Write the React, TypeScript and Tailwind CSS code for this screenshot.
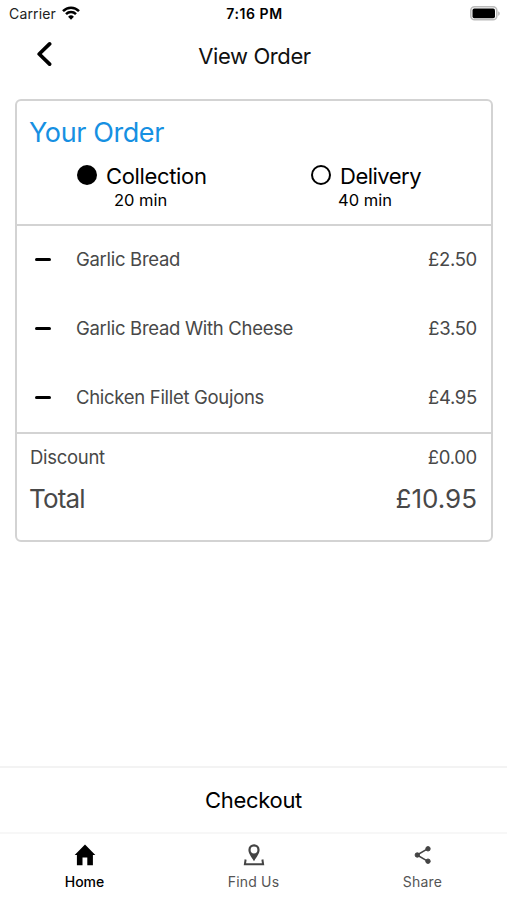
import React from 'react';

const items = [
  { name: 'Garlic Bread', price: '£2.50' },
  { name: 'Garlic Bread With Cheese', price: '£3.50' },
  { name: 'Chicken Fillet Goujons', price: '£4.95' },
];

const StatusBar = () => {
  return (
    <div className="grid h-7 grid-cols-3 items-center pl-[9px] pr-[7px] text-black">
      <div className="flex items-center gap-[6px]">
        <span className="text-[14px] leading-none tracking-[0.15px] text-[#222]">Carrier</span>
        <svg className="-mt-0.5" width="18" height="14" viewBox="0 0 18 14" fill="none" stroke="currentColor" strokeWidth="2.5">
          <path d="M1 5.1C5.5.5 12.5.5 17 5.1" />
          <path d="M4 8.2c2.8-2.8 7.2-2.8 10 0" />
          <path d="M9 13.7L6.1 10.8a4.1 4.1 0 0 1 5.8 0z" fill="currentColor" stroke="none" />
        </svg>
      </div>
      <span className="-mt-px text-center text-[14px] font-semibold leading-none tracking-[0.55px]">7:16 PM</span>
      <svg className="-mt-px justify-self-end" width="30" height="15" viewBox="0 0 30 15">
        <rect x="0.8" y="0.8" width="26" height="13" rx="3.8" fill="#fff" stroke="#bbb" strokeWidth="1.6" />
        <rect x="2.5" y="2.6" width="22.5" height="9.6" rx="1.8" fill="#000" />
        <path d="M28.3 5.2c1.8.8 1.8 3.8 0 4.6z" fill="#aaa" />
      </svg>
    </div>
  );
};

const Header = () => {
  return (
    <header className="grid h-[55px] grid-cols-[80px_1fr_80px] items-center">
      <button className="-mt-1 ml-[36px] w-4">
        <svg width="16" height="26" viewBox="0 0 16 26" fill="none" stroke="#000" strokeWidth="3.7" strokeLinecap="round" strokeLinejoin="round">
          <path d="M13.6 2.9L3.2 13l10.4 10.1" />
        </svg>
      </button>
      <h1 className="pl-0.5 text-center text-[22px] leading-none tracking-[-0.4px] text-[#111]">View Order</h1>
    </header>
  );
};

const OrderCard = () => {
  return (
    <section className="ml-[15px] mr-[14px] mt-4 h-[443px] rounded-md border-2 border-[#d3d3d3]">
      <div className="h-[125px] border-b-2 border-[#d3d3d3] pt-[17px]">
        <h2 className="ml-3 text-[27px] leading-[30px] tracking-[-0.4px] text-[#1690e2]">Your Order</h2>
        <div className="mt-[15px] grid grid-cols-[234px_1fr] text-black">
          <div className="pl-[60px]">
            <div className="flex h-6 items-center">
              <span className="mr-[9px] size-5 rounded-full bg-black" />
              <span className="pt-0.5 text-[22px] leading-6 tracking-[-0.35px]">Collection</span>
            </div>
            <div className="ml-[37px] pt-px text-[16.5px] leading-6">20 min</div>
          </div>
          <div className="pl-[60px]">
            <div className="flex h-6 items-center">
              <span className="mr-[9px] size-5 rounded-full border-2 border-black" />
              <span className="pt-0.5 text-[22px] leading-6 tracking-[-0.5px]">Delivery</span>
            </div>
            <div className="ml-[27px] pt-px text-[16.5px] leading-6">40 min</div>
          </div>
        </div>
      </div>

      <ul className="h-[208px] border-b-2 border-[#d3d3d3] text-[#484848]">
        {items.map((item) => (
          <li key={item.name} className="flex h-[69px] items-center pb-[3px] pl-[18px] pr-3.5 text-[18.5px] tracking-[-0.3px]">
            <span className="mr-[25px] h-[3px] w-4 rounded-full bg-black" />
            <span className="flex-1 pt-px">{item.name}</span>
            <span className="pt-px">{item.price}</span>
          </li>
        ))}
      </ul>

      <div className="pl-[13px] pr-3.5 pt-[9px] text-[#484848]">
        <div className="flex justify-between text-[18.5px] leading-7 tracking-[-0.3px]">
          <span>Discount</span>
          <span>£0.00</span>
        </div>
        <div className="mt-2.5 flex justify-between text-[26px] leading-9">
          <span className="-ml-px tracking-[-0.85px]">Total</span>
          <span>£10.95</span>
        </div>
      </div>
    </section>
  );
};

const TabBar = () => {
  return (
    <nav className="grid h-[68px] grid-cols-3 border-t-2 border-[#f7f7f7] pt-[9px] text-[14px] text-[#555]">
      <a className="flex flex-col items-center text-black">
        <svg width="24" height="24" viewBox="0 0 24 24" fill="currentColor">
          <path d="M12 1.6L1.7 12h2.2v10.2h5.6v-7.7h4.8v7.7h5.6V12h2.4z" />
        </svg>
        <span className="mt-[5px] font-medium leading-5">Home</span>
      </a>
      <a className="flex flex-col items-center">
        <svg width="24" height="24" viewBox="0 0 24 24" fill="none" stroke="#444" strokeWidth="2">
          <path
            d="M12 1.200A5.600 5.600 0 0 0 6.400 6.800c0 3.400 2.300 6.200 5.600 11.400 3.300-5.200 5.600-8 5.600-11.400A5.600 5.600 0 0 0 12 1.200zm0 2.400a3.400 3.400 0 1 1 0 6.800 3.400 3.400 0 0 1 0-6.800z"
            fill="#444"
            fillRule="evenodd"
            stroke="none"
          />
          <path d="M3.600 16.500L2.900 21.300h18.200l-.7-4.800" />
        </svg>
        <span className="mt-[5px] leading-5 tracking-[0.2px]">Find Us</span>
      </a>
      <a className="flex flex-col items-center">
        <svg width="24" height="24" viewBox="0 0 24 24" fill="#444" stroke="#444">
          <path d="M17 5.600L6 12l11 6.400" fill="none" strokeWidth="1.600" />
          <circle cx="17" cy="5.800" r="2.200" />
          <circle cx="6.300" cy="12" r="2.200" />
          <circle cx="17" cy="18.200" r="2.200" />
        </svg>
        <span className="mt-[5px] leading-5 tracking-[0.2px]">Share</span>
      </a>
    </nav>
  );
};

const App = () => {
  return (
    <div className="flex h-screen flex-col overflow-hidden bg-white font-['Inter',sans-serif]">
      <StatusBar />
      <Header />
      <OrderCard />
      <button className="mt-auto h-[66px] border-t-2 border-[#f3f3f3] pt-px text-[22px] tracking-[-0.3px] text-black">
        Checkout
      </button>
      <TabBar />
    </div>
  );
};

export default App;
